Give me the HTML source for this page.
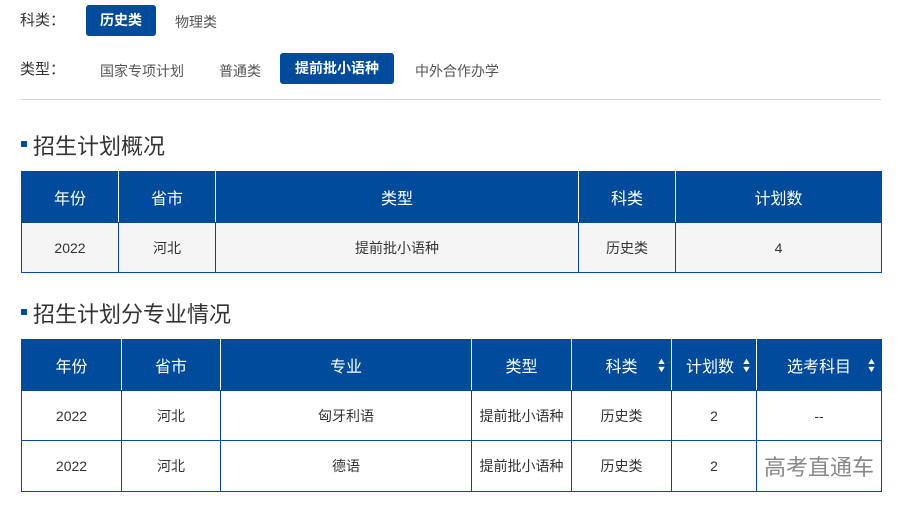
<!DOCTYPE html>
<html><head><meta charset="utf-8"><style>
*{margin:0;padding:0;box-sizing:border-box}
body{width:899px;height:505px;background:#fff;font-family:"Liberation Sans","Noto Sans CJK SC",sans-serif;color:#333;position:relative;overflow:hidden}
.a{position:absolute;white-space:nowrap}
.lbl{font-size:15px;color:#333}
.opt{font-size:14px;color:#555}
.btn{background:#004b9b;color:#fff;border-radius:3px;font-size:14px;text-align:center;font-weight:bold}
.h{font-size:22px;color:#333}
.sq{position:absolute;width:6px;height:6px;background:#004b9b}
table{position:absolute;border-collapse:collapse;table-layout:fixed;left:21px}
th{background:#004b9b;color:#fff;font-weight:normal;font-size:16px;border:1px solid #fff;border-top:1px solid #004b9b;border-bottom:1px solid #004b9b;position:relative}
th:first-child{border-left:1px solid #004b9b}
th:last-child{border-right:1px solid #004b9b}
td{border:1px solid #004b9b;text-align:center;font-size:14px;color:#333}
.g td{background:#f5f5f5}
.s{position:absolute;right:5px;top:17px;font-size:9px;line-height:8px;color:#fff;transform:scaleX(1.2)}
</style></head><body>
<div class="a lbl" style="left:20px;top:9px">科类：</div>
<div class="a btn" style="left:86px;top:5px;width:70px;height:31px;line-height:31px">历史类</div>
<div class="a opt" style="left:175px;top:12px">物理类</div>
<div class="a lbl" style="left:20px;top:58px">类型：</div>
<div class="a opt" style="left:100px;top:61px">国家专项计划</div>
<div class="a opt" style="left:219px;top:61px">普通类</div>
<div class="a btn" style="left:280px;top:53px;width:114px;height:31px;line-height:31px">提前批小语种</div>
<div class="a opt" style="left:415px;top:61px">中外合作办学</div>
<div class="a" style="left:21px;top:99px;width:860px;height:1px;background:#d5d5d5"></div>

<div class="sq" style="left:21px;top:141px"></div>
<div class="a h" style="left:33px;top:129px">招生计划概况</div>
<table style="top:171px;width:860px">
<colgroup><col style="width:97px"><col style="width:97px"><col style="width:363px"><col style="width:97px"><col style="width:206px"></colgroup>
<tr style="height:51px"><th>年份</th><th>省市</th><th>类型</th><th>科类</th><th>计划数</th></tr>
<tr class="g" style="height:50px"><td>2022</td><td>河北</td><td>提前批小语种</td><td>历史类</td><td>4</td></tr>
</table>

<div class="sq" style="left:21px;top:309px"></div>
<div class="a h" style="left:33px;top:297px">招生计划分专业情况</div>
<table style="top:339px;width:860px">
<colgroup><col style="width:100px"><col style="width:99px"><col style="width:251px"><col style="width:100px"><col style="width:100px"><col style="width:85px"><col style="width:125px"></colgroup>
<tr style="height:51px"><th>年份</th><th>省市</th><th>专业</th><th>类型</th><th>科类<span class="s">▲<br>▼</span></th><th style="text-align:left;padding-left:14px">计划数<span class="s">▲<br>▼</span></th><th>选考科目<span class="s">▲<br>▼</span></th></tr>
<tr style="height:50px"><td>2022</td><td>河北</td><td>匈牙利语</td><td>提前批小语种</td><td>历史类</td><td>2</td><td>--</td></tr>
<tr style="height:51px"><td>2022</td><td>河北</td><td>德语</td><td>提前批小语种</td><td>历史类</td><td>2</td><td style="font-size:22px;color:#888">高考直通车</td></tr>
</table>
</body></html>
